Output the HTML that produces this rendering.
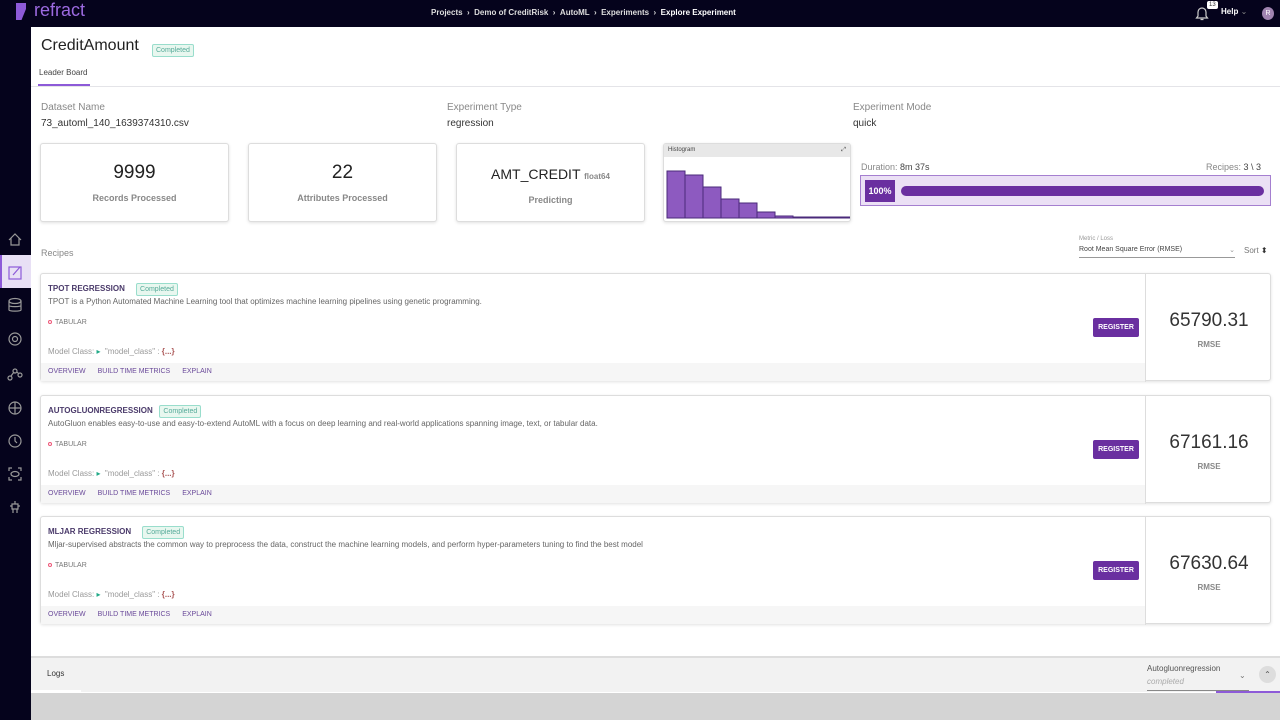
<!DOCTYPE html>
<html><head><meta charset="utf-8"><style>
*{box-sizing:border-box;margin:0;padding:0}
body{width:1280px;height:720px;overflow:hidden;font-family:"Liberation Sans",sans-serif;background:#fff;position:relative;color:#222}
.top{position:absolute;left:0;top:0;width:1280px;height:27px;background:#05031c}
.side{position:absolute;left:0;top:27px;width:31px;height:693px;background:#05031c}
.a{position:absolute}
.lbl{font-size:10px;color:#888}
.val{font-size:10px;color:#333}
.card{position:absolute;border:1px solid #ddd;border-radius:3px;box-shadow:0 1px 3px rgba(0,0,0,.12);background:#fff}
.stat{top:143px;width:189px;height:79px;text-align:center}
.stat b{display:block;font-weight:normal;font-size:19px;margin-top:18px;color:#222}
.stat span{display:block;font-size:9px;color:#888;margin-top:9px;font-weight:bold}
.badge{display:inline-block;font-size:7px;color:#5a9;border:1px solid #9dc;background:#e8f7ef;border-radius:2px;padding:2px 3px}
.rc{left:40px;width:1231px;height:108px}
.rc .t{position:absolute;left:7px;top:9px;font-size:8px;font-weight:bold;color:#4a3a6a}
.rc .d{position:absolute;left:7px;top:23px;font-size:8px;color:#666}
.rc .tab{position:absolute;left:7px;top:45px;font-size:7px;color:#777}
.rc .tab i{display:inline-block;width:4px;height:4px;border:1px solid #e57;border-radius:50%;margin-right:3px}
.rc .mc{position:absolute;left:7px;top:73px;font-size:8px;color:#999}
.rc .ft{position:absolute;left:0;top:89px;width:1104px;height:18px;background:#f6f6f6;font-size:7px;color:#6a4a9a;padding:5px 7px}
.rc .ft span{margin-right:12px}
.rc .sep{position:absolute;left:1104px;top:0;width:1px;height:108px;background:#ddd}
.rc .reg{position:absolute;left:1052px;top:44px;width:46px;height:19px;background:#6a2fa0;color:#fff;font-size:7px;font-weight:bold;text-align:center;line-height:19px;border-radius:2px}
.rc .num{position:absolute;left:1105px;top:36px;width:126px;text-align:center;font-size:19px;color:#333}
.rc .rm{position:absolute;left:1105px;top:66px;width:126px;text-align:center;font-size:8px;color:#888;font-weight:bold}
</style></head><body>
<div class="top"></div>
<div class="a" style="left:16px;top:3px;width:10px;height:17px;background:#8d5ad8;clip-path:polygon(0 0,100% 0,100% 35%,55% 100%,0 100%)"></div>
<div class="a" style="left:34px;top:0px;font-size:18px;color:#9c6ae0">refract</div>
<div class="a" style="left:431px;top:8px;font-size:8px;color:#ddd;font-weight:bold">Projects &nbsp;› &nbsp;Demo of CreditRisk &nbsp;› &nbsp;AutoML &nbsp;› &nbsp;Experiments &nbsp;› &nbsp;<span style="color:#fff">Explore Experiment</span></div>
<svg class="a" style="left:1195px;top:5px" width="14" height="16" viewBox="0 0 14 16"><path d="M3 11V7a4 4 0 0 1 8 0v4l1.5 2h-11z M5.5 14.5h3" fill="none" stroke="#ccc" stroke-width="1.2"/></svg>
<div class="a" style="left:1207px;top:1px;background:#fff;color:#333;font-size:6px;padding:1px 2px;border-radius:2px">13</div>
<div class="a" style="left:1221px;top:7px;font-size:8px;color:#fff;font-weight:bold">Help <span style="color:#888;font-weight:normal">⌄</span></div>
<div class="a" style="left:1262px;top:7px;width:12px;height:13px;border-radius:50%;background:#a084b0;color:#fff;font-size:7px;text-align:center;line-height:13px">R</div>
<div class="side"></div>
<div class="a" style="left:0;top:255px;width:31px;height:33px;background:#e8e0f5;border-left:2px solid #8d5ad8"></div>
<svg class="a" style="left:0;top:225px" width="31" height="300" viewBox="0 0 31 300" fill="none" stroke="#999" stroke-width="1.2">
<path d="M9 15l6-6 6 6M11 13v7h8v-7"/>
<rect x="9" y="42" width="12" height="12" stroke="#8d5ad8"/><path d="M13 50l7-8" stroke="#8d5ad8"/>
<ellipse cx="15" cy="76" rx="6" ry="2.5"/><path d="M9 76v9c0 1.5 12 1.5 12 0v-9M9 80.5c0 1.5 12 1.5 12 0"/>
<circle cx="15" cy="114" r="6"/><circle cx="15" cy="114" r="2.5"/>
<circle cx="10" cy="153" r="2"/><circle cx="15" cy="146" r="2"/><circle cx="20" cy="150" r="2"/><path d="M11 151l3-4M17 147l2 2"/>
<circle cx="15" cy="183" r="6"/><path d="M15 177v12M9 183h12"/>
<circle cx="15" cy="216" r="6"/><path d="M15 212v4l2 2"/>
<path d="M9 246v-3h3M18 243h3v3M21 252v3h-3M12 255h-3v-3"/><ellipse cx="15" cy="249" rx="4" ry="2.5"/>
<path d="M12 279h6v5h-6zM15 276v3M13 284v4M17 284v4M10 281h2M18 281h2"/>
</svg>

<div class="a" style="left:41px;top:37px;font-size:16px;color:#222">CreditAmount</div>
<div class="a" style="left:152px;top:39px"><span class="badge">Completed</span></div>
<div class="a" style="left:39px;top:68px;font-size:8px;color:#444">Leader Board</div>
<div class="a" style="left:38px;top:84px;width:52px;height:2px;background:#8d5ad8"></div>
<div class="a" style="left:31px;top:86px;width:1249px;height:1px;background:#e4e4e8"></div>

<div class="a lbl" style="left:41px;top:102px">Dataset Name</div>
<div class="a val" style="left:41px;top:118px">73_automl_140_1639374310.csv</div>
<div class="a lbl" style="left:447px;top:102px">Experiment Type</div>
<div class="a val" style="left:447px;top:118px">regression</div>
<div class="a lbl" style="left:853px;top:102px">Experiment Mode</div>
<div class="a val" style="left:853px;top:118px">quick</div>

<div class="card stat" style="left:40px"><b>9999</b><span>Records Processed</span></div>
<div class="card stat" style="left:248px"><b>22</b><span>Attributes Processed</span></div>
<div class="card stat" style="left:456px"><b style="font-size:14px;margin-top:22px">AMT_CREDIT <small style="font-size:8px;color:#888;font-weight:bold">float64</small></b><span style="margin-top:13px">Predicting</span></div>
<div class="card" style="left:663px;top:143px;width:188px;height:79px;overflow:hidden">
<div style="height:13px;background:#e8e8e8;font-size:6px;color:#444;padding:3px 4px">Histogram<span style="float:right">⤢</span></div>
<svg width="188" height="66" style="display:block"><g fill="#8d5ac0" stroke="#4a2a7a" stroke-width="1">
<rect x="3" y="14" width="18" height="47"/><rect x="21" y="18" width="18" height="43"/><rect x="39" y="30" width="18" height="31"/><rect x="57" y="42" width="18" height="19"/><rect x="75" y="46" width="18" height="15"/><rect x="93" y="55" width="18" height="6"/><rect x="111" y="59" width="18" height="2"/><rect x="129" y="60" width="57" height="1"/></g></svg>
</div>
<div class="a" style="left:861px;top:162px;font-size:9px;color:#888">Duration: <span style="color:#444">8m 37s</span></div>
<div class="a" style="left:1206px;top:162px;font-size:9px;color:#888">Recipes: <span style="color:#444">3 \ 3</span></div>
<div class="a" style="left:860px;top:175px;width:411px;height:31px;border:1.5px solid #a57fd0;background:#ebe0f5"></div>
<div class="a" style="left:865px;top:180px;width:30px;height:22px;background:#6a2fa0;color:#fff;font-size:9px;font-weight:bold;line-height:22px;text-align:center">100%</div>
<div class="a" style="left:901px;top:186px;width:363px;height:10px;background:#6a2fa0;border-radius:5px"></div>

<div class="a lbl" style="left:41px;top:248px;font-size:9px">Recipes</div>
<div class="a" style="left:1079px;top:236px;font-size:6px;color:#999">Metric / Loss</div>
<div class="a" style="left:1079px;top:246px;width:156px;font-size:7px;color:#444;border-bottom:1px solid #999;padding-bottom:3px">Root Mean Square Error (RMSE)<span style="float:right;color:#999">⌄</span></div>
<div class="a" style="left:1244px;top:246px;font-size:8px;color:#777">Sort <span style="color:#333">⬍</span></div>

<div class="card rc" style="top:273px"><div class="t">TPOT REGRESSION &nbsp;&nbsp;&nbsp; <span class="badge" style="font-weight:normal">Completed</span></div><div class="d">TPOT is a Python Automated Machine Learning tool that optimizes machine learning pipelines using genetic programming.</div><div class="tab"><i></i>TABULAR</div><div class="mc">Model Class: <span style="color:#2a8">▸</span> &nbsp;"model_class" : <b style="color:#a55">{...}</b></div><div class="ft"><span>OVERVIEW</span><span>BUILD TIME METRICS</span><span>EXPLAIN</span></div><div class="sep"></div><div class="reg">REGISTER</div><div class="num">65790.31</div><div class="rm">RMSE</div></div>
<div class="card rc" style="top:395px"><div class="t">AUTOGLUONREGRESSION &nbsp; <span class="badge" style="font-weight:normal">Completed</span></div><div class="d">AutoGluon enables easy-to-use and easy-to-extend AutoML with a focus on deep learning and real-world applications spanning image, text, or tabular data.</div><div class="tab"><i></i>TABULAR</div><div class="mc">Model Class: <span style="color:#2a8">▸</span> &nbsp;"model_class" : <b style="color:#a55">{...}</b></div><div class="ft"><span>OVERVIEW</span><span>BUILD TIME METRICS</span><span>EXPLAIN</span></div><div class="sep"></div><div class="reg">REGISTER</div><div class="num">67161.16</div><div class="rm">RMSE</div></div>
<div class="card rc" style="top:516px"><div class="t">MLJAR REGRESSION &nbsp;&nbsp;&nbsp; <span class="badge" style="font-weight:normal">Completed</span></div><div class="d">Mljar-supervised abstracts the common way to preprocess the data, construct the machine learning models, and perform hyper-parameters tuning to find the best model</div><div class="tab"><i></i>TABULAR</div><div class="mc">Model Class: <span style="color:#2a8">▸</span> &nbsp;"model_class" : <b style="color:#a55">{...}</b></div><div class="ft"><span>OVERVIEW</span><span>BUILD TIME METRICS</span><span>EXPLAIN</span></div><div class="sep"></div><div class="reg">REGISTER</div><div class="num">67630.64</div><div class="rm">RMSE</div></div>

<div class="a" style="left:31px;top:656px;width:1249px;height:2px;background:#ddd"></div>
<div class="a" style="left:31px;top:658px;width:1249px;height:34px;background:#f2f2f2"></div>
<div class="a" style="left:47px;top:669px;font-size:8px;color:#333">Logs</div>
<div class="a" style="left:31px;top:690px;width:50px;height:2px;background:#fff"></div>
<div class="a" style="left:1147px;top:664px;font-size:8px;color:#555">Autogluonregression</div>
<div class="a" style="left:1147px;top:677px;font-size:8px;color:#aaa;font-style:italic">completed</div>
<div class="a" style="left:1147px;top:690px;width:102px;height:1px;background:#888"></div>
<div class="a" style="left:1239px;top:671px;font-size:8px;color:#777">⌄</div>
<div class="a" style="left:1259px;top:666px;width:17px;height:17px;border-radius:50%;background:#ddd;font-size:8px;color:#555;text-align:center;line-height:17px">⌃</div>
<div class="a" style="left:1216px;top:691px;width:64px;height:2px;background:#8d5ad8"></div>
<div class="a" style="left:31px;top:693px;width:1249px;height:27px;background:#d4d4d4"></div>
</body></html>
